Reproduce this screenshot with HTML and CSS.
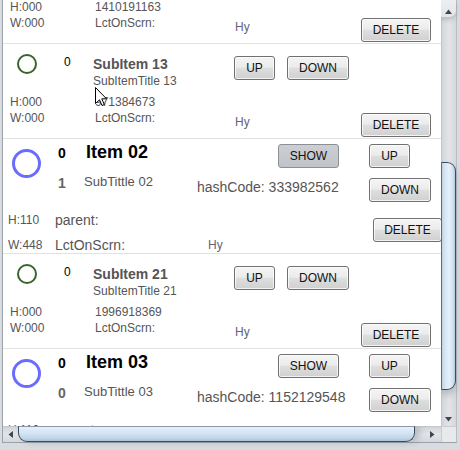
FILE: index.html
```html
<!DOCTYPE html>
<html>
<head>
<meta charset="utf-8">
<link rel="stylesheet" href="styles.css">
</head>
<body>
<div class="frame">
  <div class="viewport">
    <div class="list">
      <div class="sub">
        <div class="sub-top"></div>
        <div class="sub-bottom">
          <div class="lbl">H:000</div><div class="lbl">1410191163</div>
          <div class="lbl r2">W:000</div><div class="lbl r2">LctOnScrn:</div>
          <div class="hy s-hy">Hy</div>
          <button class="btn w-del s-del">DELETE</button>
        </div>
      </div>

      <div class="sub">
        <div class="sub-top">
          <div class="ring-s"></div>
          <div class="num">0</div>
          <div class="titles"><div class="s-title">SubItem 13</div><div class="s-sub">SubItemTitle 13</div></div>
          <button class="btn w-up">UP</button>
          <button class="btn w-down">DOWN</button>
        </div>
        <div class="sub-bottom">
          <div class="lbl">H:000</div><div class="lbl">971384673</div>
          <div class="lbl r2">W:000</div><div class="lbl r2">LctOnScrn:</div>
          <div class="hy s-hy">Hy</div>
          <button class="btn w-del s-del">DELETE</button>
        </div>
      </div>

      <div class="main">
        <div class="main-top">
          <div class="ring-m"></div>
          <div class="m-num">0</div>
          <div class="m-title">Item 02</div>
          <button class="btn w-show m-show active">SHOW</button>
          <button class="btn w-up m-up">UP</button>
          <div class="m-count">1</div>
          <div class="m-sub">SubTittle 02</div>
          <div class="m-hash">hashCode: 333982562</div>
          <button class="btn w-down m-down">DOWN</button>
        </div>
        <div class="main-bottom">
          <div class="lbl">H:110</div><div class="big">parent:</div>
          <div class="spacer"></div>
          <button class="btn w-mdel m-del">DELETE</button>
          <div class="lbl">W:448</div><div class="big">LctOnScrn:</div>
          <div class="hy">Hy</div>
        </div>
      </div>

      <div class="sub">
        <div class="sub-top">
          <div class="ring-s"></div>
          <div class="num">0</div>
          <div class="titles"><div class="s-title">SubItem 21</div><div class="s-sub">SubItemTitle 21</div></div>
          <button class="btn w-up">UP</button>
          <button class="btn w-down">DOWN</button>
        </div>
        <div class="sub-bottom">
          <div class="lbl">H:000</div><div class="lbl">1996918369</div>
          <div class="lbl r2">W:000</div><div class="lbl r2">LctOnScrn:</div>
          <div class="hy s-hy">Hy</div>
          <button class="btn w-del s-del">DELETE</button>
        </div>
      </div>

      <div class="main">
        <div class="main-top">
          <div class="ring-m"></div>
          <div class="m-num">0</div>
          <div class="m-title">Item 03</div>
          <button class="btn w-show m-show">SHOW</button>
          <button class="btn w-up m-up">UP</button>
          <div class="m-count">0</div>
          <div class="m-sub">SubTittle 03</div>
          <div class="m-hash">hashCode: 1152129548</div>
          <button class="btn w-down m-down">DOWN</button>
        </div>
        <div class="main-bottom">
          <div class="lbl">H:110</div><div class="big">parent:</div>
          <div class="spacer"></div>
          <button class="btn w-mdel m-del">DELETE</button>
          <div class="lbl">W:448</div><div class="big">LctOnScrn:</div>
          <div class="hy">Hy</div>
        </div>
      </div>
    </div>
    <svg class="cursor" width="13" height="20" viewBox="0 0 13 20"><path d="M0.5 0.5 V16.5 L4.5 12.8 L7 18.5 L9.3 17.5 L6.8 11.8 H11.5 Z" fill="#fff" stroke="#000" stroke-width="1" stroke-linejoin="miter"/></svg>
  </div>

  <div class="vbar">
    <div class="arr-up"><svg width="7" height="5" viewBox="0 0 7 5"><path d="M0 5 L3.5 0.5 L7 5 Z" fill="#3d4753"/></svg></div>
    <div class="vthumb"></div>
    <div class="vfill"></div>
    <div class="arr-down"><svg width="7" height="5" viewBox="0 0 7 5"><path d="M0 0 L3.5 4.5 L7 0 Z" fill="#3d4753"/></svg></div>
  </div>

  <div class="hbar">
    <div class="arr-left"><svg width="5" height="7" viewBox="0 0 5 7"><path d="M5 0 L0.5 3.5 L5 7 Z" fill="#3d4753"/></svg></div>
    <div class="hthumb"></div>
    <div class="hfill"></div>
    <div class="arr-right"><svg width="5" height="7" viewBox="0 0 5 7"><path d="M0 0 L4.5 3.5 L0 7 Z" fill="#3d4753"/></svg></div>
  </div>

  <div class="corner"></div>
</div>
</body>
</html>
```
FILE: styles.css
```css
* { box-sizing: border-box; }
html, body { margin: 0; padding: 0; }
body {
  width: 460px;
  height: 450px;
  overflow: hidden;
  background: #d8dbdf;
  font-family: "Liberation Sans", Arial, sans-serif;
}
.frame {
  margin-left: 2px;
  width: 455px;
  display: grid;
  grid-template-columns: 438px 15px;
  grid-template-rows: 426px 16px;
  border-left: 1px solid #9ca1a7;
  border-right: 1px solid #b9bdc2;
  border-bottom: 1px solid #9ca1a7;
  background: #fff;
}
.viewport {
  position: relative;
  overflow: hidden;
  background: #fff;
}
.list {
  margin-top: -51px;
  width: 448px;
}
.sub {
  height: 95px;
  border-bottom: 1px solid #e2e2e2;
  overflow: hidden;
}
.main {
  height: 115px;
  border-bottom: 1px solid #e2e2e2;
  overflow: hidden;
}

/* buttons */
.btn {
  display: block;
  height: 24px;
  padding: 0;
  margin: 0;
  border: 1px solid #707070;
  border-radius: 3px;
  background: linear-gradient(#f4f4f4 0%, #ececec 45%, #dedede 52%, #d0d0d0 100%);
  box-shadow: inset 0 0 0 1px rgba(255, 255, 255, 0.75);
  font: 12px/22px "Liberation Sans", Arial, sans-serif;
  color: #121212;
  text-align: center;
}
.btn.active {
  background: linear-gradient(#cbced2, #c0c4c8);
  border-color: #8c8f93;
  box-shadow: none;
}
.w-up { width: 41px; }
.w-down { width: 62px; }
.w-del { width: 70px; }
.w-mdel { width: 69px; }
.w-show { width: 61px; }

/* sub rows */
.sub-top {
  height: 50px;
  padding-top: 10px;
  display: grid;
  grid-template-columns: 61px 29px 141px 53px auto;
  align-items: start;
}
.ring-s {
  margin-left: 14px;
  width: 20px;
  height: 20px;
  border: 2px solid #38652b;
  border-radius: 50%;
}
.num {
  margin-top: 1px;
  font-size: 12px;
  line-height: 14px;
  color: #000;
}
.titles { margin-top: 2px; }
.s-title {
  font-size: 14px;
  line-height: 16px;
  font-weight: bold;
  color: #555;
}
.s-sub {
  margin-top: 2px;
  font-size: 12px;
  line-height: 14px;
  color: #555;
}
.sub-top .btn { margin-top: 2px; }

.sub-bottom {
  padding-left: 7px;
  display: grid;
  grid-template-columns: 85px 140px 126px auto;
  grid-template-rows: 16px 16px;
  align-items: start;
}
.lbl {
  font-size: 12px;
  line-height: 16px;
  color: #565656;
}
.r2 { grid-row: 2; }
.hy {
  font-size: 12px;
  line-height: 16px;
  color: #62627e;
}
.s-hy { grid-row: 2; grid-column: 3; margin-top: 4px; }
.s-del { grid-row: 2; grid-column: 4; margin-top: 3px; }

/* main rows */
.main-top {
  height: 73px;
  display: grid;
  grid-template-columns: 55px 26px 113px 81px 91px auto;
  grid-template-rows: 34px auto;
  align-items: start;
}
.ring-m {
  grid-row: 1 / 3;
  grid-column: 1;
  margin: 10px 0 0 9px;
  width: 29px;
  height: 29px;
  border: 3px solid #6a6bff;
  border-radius: 50%;
}
.m-num {
  grid-row: 1; grid-column: 2;
  margin-top: 6px;
  font-size: 14px; line-height: 16px; font-weight: bold; color: #000;
}
.m-title {
  grid-row: 1; grid-column: 3;
  margin: 3px 0 0 2px;
  font-size: 18px; line-height: 20px; font-weight: bold; color: #000;
  white-space: nowrap;
}
.m-show { grid-row: 1; grid-column: 5; margin-top: 5px; }
.m-up { grid-row: 1; grid-column: 6; margin-top: 5px; }
.m-count {
  grid-row: 2; grid-column: 2;
  margin-top: 2px;
  font-size: 14px; line-height: 16px; font-weight: bold; color: #666;
}
.m-sub {
  grid-row: 2; grid-column: 3;
  margin-top: 1px;
  font-size: 13px; line-height: 16px; color: #555;
  white-space: nowrap;
}
.m-hash {
  grid-row: 2; grid-column: 4 / 6;
  margin-top: 6px;
  font-size: 14px; line-height: 16px; color: #555;
  white-space: nowrap;
}
.m-down { grid-row: 2; grid-column: 6; margin-top: 5px; }

.main-bottom {
  padding-left: 5px;
  display: grid;
  grid-template-columns: 47px 153px 165px auto;
  grid-template-rows: 25px 25px;
  align-items: start;
}
.big {
  font-size: 14px;
  line-height: 16px;
  color: #555;
  white-space: nowrap;
}
.m-del { margin-top: 6px; }

/* cursor overlay */
.cursor {
  position: absolute;
  left: 92px;
  top: 87px;
}

/* vertical scrollbar */
.vbar {
  grid-column: 2;
  grid-row: 1;
  display: flex;
  flex-direction: column;
  background: linear-gradient(to right, #bfc3c8 0, #d6d9dd 2px, #e2e4e7 55%, #d4d7db 100%);
}
.arr-up {
  height: 17px;
  padding: 9px 0 0 4px;
  display: flex;
  background: linear-gradient(#eceef0, #e2e4e7);
  border-radius: 0 0 7px 0;
  box-shadow: 0 3px 4px rgba(80, 90, 100, 0.25);
}
.arr-up svg, .arr-down svg { display: block; }
.vthumb {
  margin-top: 145px;
  height: 228px;
  border: 1px solid #3a4c62;
  border-left-color: #5b6c80;
  border-radius: 0 9px 9px 0;
  background: linear-gradient(to right, #bfd3e6 0, #d9e7f4 25%, #e6f0f8 55%, #d0e0ef 85%, #b3c8dc 100%);
  box-shadow: 0 5px 6px rgba(70, 80, 90, 0.25);
}
.vfill { flex: 1; }
.arr-down {
  height: 18px;
  padding: 9px 0 0 4px;
}

/* horizontal scrollbar */
.hbar {
  grid-column: 1;
  grid-row: 2;
  display: flex;
  background: linear-gradient(#bfc3c8 0, #d6d9dd 2px, #e2e4e7 55%, #d4d7db 100%);
}
.arr-left {
  width: 15px;
  padding: 5px 0 0 5px;
}
.arr-left svg, .arr-right svg { display: block; }
.hthumb {
  width: 397px;
  border: 1px solid #3a4c62;
  border-top-color: #8a9aac;
  border-radius: 0 0 9px 9px;
  background: linear-gradient(#e6f0f8 0, #d6e5f3 40%, #c4d8ea 75%, #aec4d9 100%);
  box-shadow: 5px 0 6px rgba(70, 80, 90, 0.25);
}
.hfill { flex: 1; }
.arr-right {
  width: 16px;
  padding: 5px 0 0 5px;
}
.corner {
  grid-column: 2;
  grid-row: 2;
  background: #e8e9eb;
  border-top: 1px solid #c9ccd0;
  border-left: 1px solid #c9ccd0;
}
```
